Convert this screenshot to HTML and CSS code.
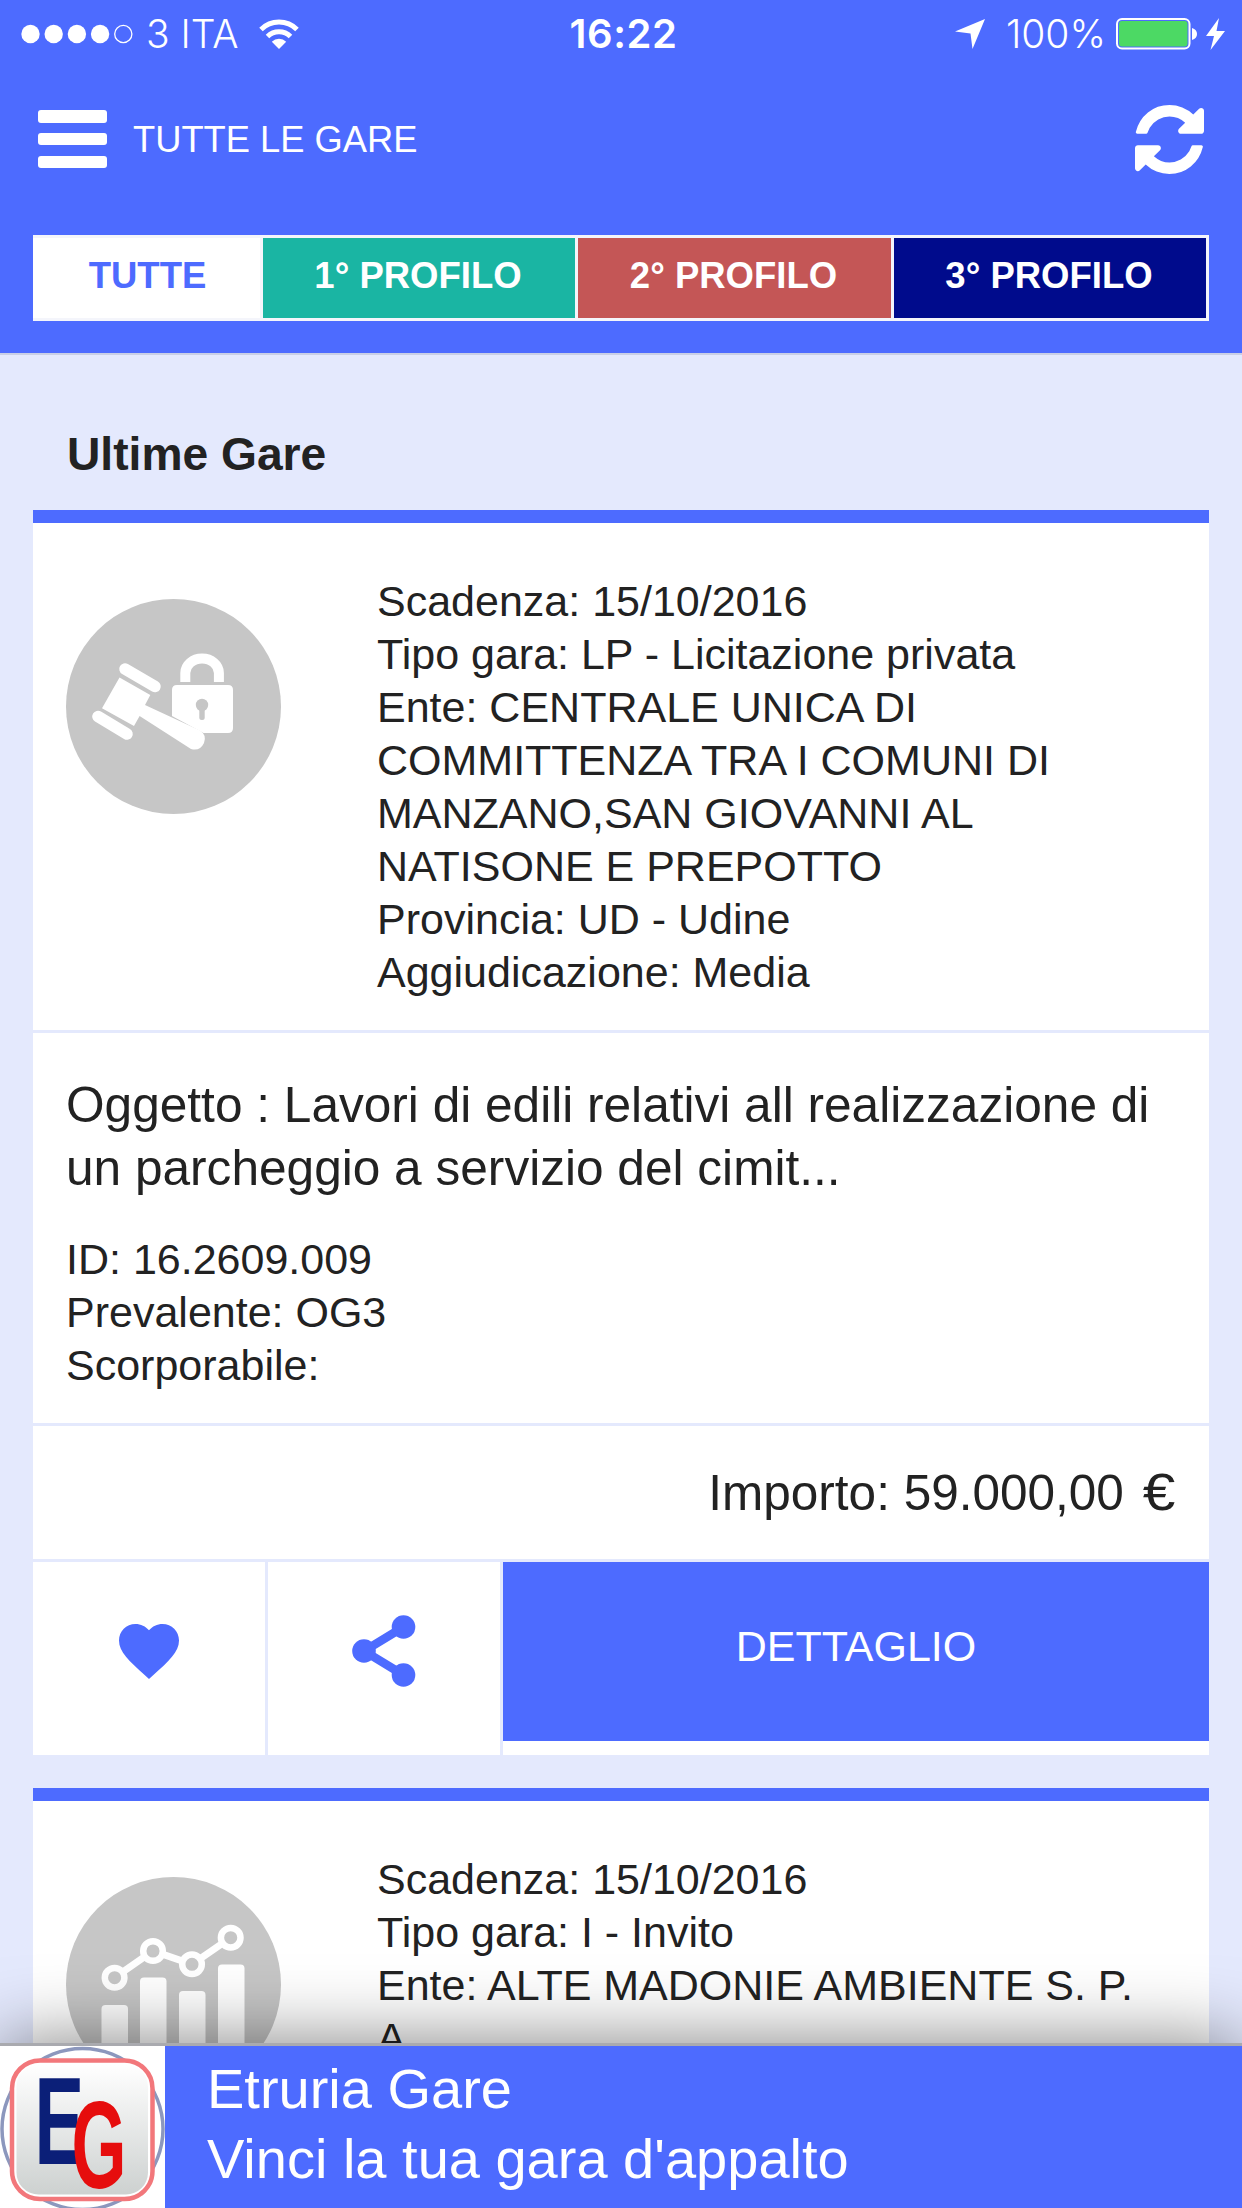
FILE: index.html
```html
<!DOCTYPE html>
<html lang="it">

<head>
    <meta charset="UTF-8">
    <meta name="viewport" content="width=device-width, initial-scale=1.0">
    <title>Tutte le gare</title>
    <link rel="stylesheet" href="styles.css">
</head>

<body>

    <header class="header">
        <div class="status-bar">
            <div class="status-left">
                <svg class="signal" viewBox="0 0 112 20">
                    <circle cx="9.500" cy="10" r="9.200" />
                    <circle cx="32.700" cy="10" r="9.200" />
                    <circle cx="55.900" cy="10" r="9.200" />
                    <circle cx="79.100" cy="10" r="9.200" />
                    <circle class="empty" cx="102.300" cy="10" r="8.600" />
                </svg>
                <span class="carrier">3 ITA</span>
                <svg class="wifi" viewBox="0 0 40 30">
                    <path class="arc" d="M2 10.500a25.500 25.500 0 0 1 36 0M8.500 17.500a16.300 16.300 0 0 1 23 0" />
                    <path d="M20 30l-7.200-7.300a10.500 10.500 0 0 1 14.400 0z" />
                </svg>
            </div>
            <span class="clock">16:22</span>
            <div class="status-right">
                <svg class="location" viewBox="0 0 30 30">
                    <path d="M30 0L17.500 30L15.500 14.500L0 12.500z" />
                </svg>
                <span class="percent">100%</span>
                <svg class="battery" viewBox="0 0 82 32">
                    <rect class="shell" x="1" y="1" width="72.500" height="29.500" rx="5" />
                    <rect class="charge" x="3" y="3" width="68.500" height="25.500" rx="3" />
                    <path d="M76 10q5 1.500 5 6t-5 6z" />
                </svg>
                <svg class="bolt" viewBox="0 0 20 32">
                    <path d="M13 0L0 18h8L4.500 32L19 13h-8.500z" />
                </svg>
            </div>
        </div>

        <div class="navbar">
            <button type="button" class="menu">
                <span></span>
                <span></span>
                <span></span>
            </button>
            <h1>TUTTE LE GARE</h1>
            <svg class="refresh" viewBox="0 0 1536 1536">
                <path d="M1511 928q0 5-1 7-64 268-268 434.500t-478 166.500q-146 0-282.500-55t-243.500-157l-129 129q-19 19-45 19t-45-19-19-45v-448q0-26 19-45t45-19h448q26 0 45 19t19 45-19 45l-137 137q71 66 161 102t187 36q134 0 250-65t186-179q11-17 53-117 8-23 30-23h192q13 0 22.500 9.500t9.500 22.500zm25-800v448q0 26-19 45t-45 19h-448q-26 0-45-19t-19-45 19-45l138-138q-148-137-349-137-134 0-250 65t-186 179q-11 17-53 117-8 23-30 23h-199q-13 0-22.500-9.500t-9.500-22.500v-7q65-268 270-434.500t480-166.500q146 0 284 55.500t245 156.500l130-129q19-19 45-19t45 19 19 45z" />
            </svg>
        </div>

        <nav class="tabs">
            <a class="tab active">TUTTE</a>
            <a class="tab first">1° PROFILO</a>
            <a class="tab second">2° PROFILO</a>
            <a class="tab third">3° PROFILO</a>
        </nav>
    </header>

    <main>
        <h2>Ultime Gare</h2>

        <article class="card">
            <div class="card-head">
                <svg class="badge" viewBox="0 0 215 215">
                    <circle class="disc" cx="107.500" cy="107.500" r="107.500" />
                    <!-- gavel -->
                    <path class="cap" d="M59 70L89 87.500M32 117.500L61 135" />
                    <path d="M53.500 78.500L84.300 96L79 106L134 131.500Q141 136 138 144Q134 152.500 125 150L73.600 117L68 127L36 109.300z" />
                    <!-- lock -->
                    <path class="shackle" d="M119.300 83V74a16.800 14.500 0 0 1 33.600 0V83" />
                    <path d="M111 86h51q5 0 5 5v38q0 5-5 5h-24.500L106 117V91q0-5 5-5z" />
                    <circle class="disc" cx="136" cy="106" r="6.200" />
                    <rect class="disc" x="133.300" y="107" width="5.400" height="14" rx="2.500" />
                </svg>
                <div class="info">
                    Scadenza: 15/10/2016<br>
                    Tipo gara: LP - Licitazione privata<br>
                    Ente: CENTRALE UNICA DI<br>
                    COMMITTENZA TRA I COMUNI DI<br>
                    MANZANO,SAN GIOVANNI AL<br>
                    NATISONE E PREPOTTO<br>
                    Provincia: UD - Udine<br>
                    Aggiudicazione: Media
                </div>
            </div>
            <div class="card-body">
                <p class="subject">Oggetto : Lavori di edili relativi all realizzazione di<br>un parcheggio a servizio del cimit...</p>
                <p class="details">
                    ID: 16.2609.009<br>
                    Prevalente: OG3<br>
                    Scorporabile:
                </p>
            </div>
            <div class="amount">Importo: 59.000,00 <span class="euro">€</span></div>
            <div class="actions">
                <div class="action">
                    <svg class="heart" viewBox="0 0 24 24">
                        <path d="M12 21.350l-1.450-1.320C5.400 15.360 2 12.280 2 8.500 2 5.420 4.420 3 7.500 3c1.740 0 3.410.810 4.500 2.090C13.090 3.810 14.760 3 16.500 3 19.580 3 22 5.420 22 8.500c0 3.780-3.400 6.860-8.550 11.540L12 21.350z" />
                    </svg>
                </div>
                <div class="action">
                    <svg class="share" viewBox="0 0 64 72">
                        <path d="M51.500 12L12 36L51.500 60" />
                        <circle cx="12" cy="36" r="11.800" />
                        <circle cx="51.500" cy="12" r="11.800" />
                        <circle cx="51.500" cy="60" r="11.800" />
                    </svg>
                </div>
                <a class="detail-button">DETTAGLIO</a>
            </div>
        </article>

        <article class="card">
            <div class="card-head">
                <svg class="badge" viewBox="0 0 215 215">
                    <circle class="disc" cx="107.500" cy="107.500" r="107.500" />
                    <!-- trend line -->
                    <path class="trend" d="M48.600 100.700L87 74L126 87.300L164.700 60.700" />
                    <circle class="node" cx="48.600" cy="100.700" r="9.800" />
                    <circle class="node" cx="87" cy="74" r="9.800" />
                    <circle class="node" cx="126" cy="87.300" r="9.800" />
                    <circle class="node" cx="164.700" cy="60.700" r="9.800" />
                    <!-- bars -->
                    <rect x="35.500" y="128" width="26.500" height="60" rx="4" />
                    <rect x="74" y="100.500" width="26.500" height="90" rx="4" />
                    <rect x="113" y="114" width="26.500" height="76" rx="4" />
                    <rect x="152" y="87.500" width="26.500" height="90" rx="4" />
                </svg>
                <div class="info">
                    Scadenza: 15/10/2016<br>
                    Tipo gara: I - Invito<br>
                    Ente: ALTE MADONIE AMBIENTE S. P.<br>
                    A.
                </div>
            </div>
        </article>
    </main>

    <footer class="banner">
        <svg class="logo" viewBox="0 0 165 162">
            <defs>
                <linearGradient id="plate" x1="0" y1="0" x2="0" y2="1">
                    <stop offset="0" stop-color="#ffffff" />
                    <stop offset="1" stop-color="#cdd1d0" />
                </linearGradient>
            </defs>
            <rect width="165" height="162" fill="#fff" />
            <circle cx="82.500" cy="83" r="80.500" fill="#fff" stroke="#8c97bd" stroke-width="3.500" />
            <rect x="12" y="14.500" width="140.500" height="138.500" rx="28" fill="#fff" stroke="#f2777b" stroke-width="4.500" />
            <rect x="16.500" y="18.500" width="131.500" height="130" rx="22" fill="url(#plate)" />
            <text class="logo-e" transform="translate(34.500 118) scale(.6 1)">E</text>
            <text class="logo-g" transform="translate(71.500 142) scale(.57 1)">G</text>
        </svg>
        <div class="banner-text">
            <div>Etruria Gare</div>
            <div>Vinci la tua gara d'appalto</div>
        </div>
    </footer>

</body>

</html>
```
FILE: styles.css
```css
* {
    box-sizing: border-box;
}

body {
    margin: 0;
    height: 2208px;
    background-color: #e4e9fd;
    color: #222;
    font-family: "Liberation Sans", Arial, sans-serif;
}

svg {
    display: block;
    flex: none;
    fill: #fff;
}

h1,
h2,
p {
    margin: 0;
}

/* header */
.header {
    height: 355px;
    background-color: #4d6bff;
    border-bottom: 2px solid #c9cfe6;
    color: #fff;
}

.status-bar {
    display: grid;
    grid-template-columns: 1fr auto 1fr;
    align-items: center;
    height: 68px;
    padding: 0 16px 0 21px;
    font-family: Inter, "Liberation Sans", sans-serif;
    font-size: 39px;
    line-height: 68px;
}

.status-left,
.status-right {
    display: flex;
    align-items: center;
}

.status-right {
    justify-content: flex-end;
}

.signal {
    width: 112px;
    height: 20px;
}

.signal .empty {
    fill: none;
    stroke: #fff;
    stroke-width: 1.3;
}

.carrier {
    margin-left: 13px;
    font-weight: 300;
}

.wifi {
    width: 40px;
    height: 30px;
    margin-left: 20px;
}

.wifi .arc {
    fill: none;
    stroke: #fff;
    stroke-width: 5;
}

.clock {
    font-size: 40px;
    font-weight: 600;
    letter-spacing: 0.6px;
}

.location {
    width: 30px;
    height: 30px;
    margin-right: 21px;
}

.percent {
    font-weight: 300;
}

.battery {
    width: 82px;
    height: 32px;
    margin-left: 10px;
}

.battery .shell {
    fill: none;
    stroke: #fff;
    stroke-width: 2;
}

.battery .charge {
    fill: #4cd964;
}

.bolt {
    width: 20px;
    height: 32px;
    margin-left: 8px;
}

.navbar {
    display: flex;
    align-items: center;
    height: 142px;
    padding: 0 38px;
}

.menu {
    display: flex;
    flex-direction: column;
    justify-content: space-between;
    width: 69px;
    height: 58px;
    padding: 0;
    border: none;
    background: none;
}

.menu span {
    height: 12.5px;
    border-radius: 3px;
    background-color: #fff;
}

.navbar h1 {
    margin-left: 26px;
    padding-top: 2px;
    font-size: 36.3px;
    font-weight: normal;
}

.refresh {
    width: 69px;
    height: 69px;
    margin-left: auto;
}

.tabs {
    display: grid;
    grid-template-columns: 227px 312px 313px 312px;
    gap: 3px;
    height: 86px;
    margin: 25px 33px 0;
    padding: 3px;
    padding-left: 0;
    background-color: #f4f5fb;
}

.tab {
    font-size: 36.5px;
    font-weight: bold;
    line-height: 76px;
    text-align: center;
}

.tab.active {
    padding-left: 2px;
    background-color: #fff;
    color: #4d6bff;
}

.tab.first,
.tab.second,
.tab.third {
    padding-right: 2px;
}

.tab.first {
    background-color: #1ab5a3;
}

.tab.second {
    background-color: #c45656;
}

.tab.third {
    background-color: #000b8c;
}

/* tender list */
main {
    height: 1853px;
    padding: 72px 33px 0;
    overflow: hidden;
}

h2 {
    height: 83px;
    padding-left: 34px;
    font-size: 46.2px;
    line-height: 54px;
}

.card {
    margin-bottom: 33px;
    border-top: 13px solid #4d6bff;
    background-color: #fff;
}

.card-head {
    display: flex;
    height: 510px;
    padding: 52px 33px 0;
    border-bottom: 3px solid #e4e9fd;
}

.badge {
    width: 215px;
    height: 215px;
    margin-top: 24px;
}

.badge .disc {
    fill: #c6c6c6;
}

.badge .cap,
.badge .shackle,
.badge .trend,
.badge .node {
    fill: none;
    stroke: #fff;
}

.badge .cap {
    stroke-width: 11.5;
    stroke-linecap: round;
}

.badge .shackle {
    stroke-width: 10;
}

.badge .trend {
    stroke-width: 7;
}

.badge .node {
    fill: #c6c6c6;
    stroke-width: 6.5;
}

.info,
.details {
    font-size: 43px;
    line-height: 53px;
}

.info {
    margin-left: 96px;
    white-space: nowrap;
}

.card-body {
    height: 393px;
    padding: 41px 33px 0;
    border-bottom: 3px solid #e4e9fd;
}

.subject {
    font-size: 49.6px;
    line-height: 63px;
    white-space: nowrap;
}

.details {
    margin-top: 33px;
}

.amount {
    height: 136px;
    padding-right: 34px;
    border-bottom: 3px solid #e4e9fd;
    font-size: 49.5px;
    line-height: 133px;
    text-align: right;
}

.euro {
    display: inline-block;
    margin-left: 4px;
    font-size: 51px;
    line-height: 1;
    transform: scaleX(1.15);
    transform-origin: right;
}

.amount .euro {
    padding-left: 5px;
}

.actions {
    display: flex;
    height: 193px;
}

.action {
    display: flex;
    justify-content: center;
    width: 235px;
    padding-top: 53px;
    border-right: 3px solid #e4e9fd;
}

.heart,
.share {
    fill: #4d6bff;
}

.heart {
    width: 72px;
    height: 72px;
}

.share {
    width: 64px;
    height: 72px;
}

.share path {
    fill: none;
    stroke: #4d6bff;
    stroke-width: 8.5;
}

.detail-button {
    flex: 1;
    height: 179px;
    background-color: #4d6bff;
    color: #fff;
    font-size: 43px;
    line-height: 169px;
    text-align: center;
}

/* app banner */
.banner {
    position: fixed;
    left: 0;
    right: 0;
    bottom: 0;
    display: flex;
    height: 165px;
    border-top: 3px solid #a9aaaf;
    background-color: #4d6bff;
    box-shadow: 0 0 75px rgba(0, 0, 0, 0.5);
    color: #fff;
}

.logo {
    width: 165px;
    height: 162px;
}

.logo text {
    font-family: "Liberation Sans", Arial, sans-serif;
    font-weight: bold;
    font-size: 124px;
}

.logo .logo-e {
    fill: #0b1f78;
}

.logo .logo-g {
    fill: #e60d0d;
}

.banner-text {
    padding: 8px 0 0 42px;
    font-size: 56px;
    line-height: 70px;
}
```
